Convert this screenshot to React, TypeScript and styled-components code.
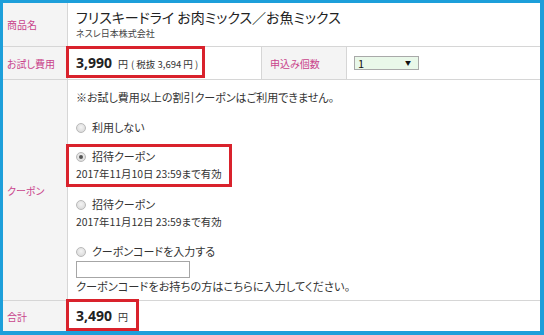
import React from "react";
import styled, { createGlobalStyle } from "styled-components";

const Global = createGlobalStyle`
  html, body { margin: 0; padding: 0; background: #fff; }
  body { font-family: "Noto Sans CJK JP", "Noto Sans", sans-serif; color: #333; }
  * { box-sizing: border-box; }
`;

const Frame = styled.div`
  width: 544px;
  height: 335px;
  border: 3px solid #1d9fda;
  border-right-width: 4px;
  border-bottom-width: 4px;
  background: #fff;
  display: flex;
  flex-direction: column;
  overflow: hidden;
  font-feature-settings: "palt";
`;

const Row = styled.div<{ $h?: number; $grow?: boolean; $last?: boolean }>`
  display: flex;
  height: ${(p) => (p.$h ? `${p.$h}px` : "auto")};
  flex: ${(p) => (p.$grow ? "1 1 auto" : "0 0 auto")};
  border-bottom: ${(p) => (p.$last ? "none" : "1px solid #d6d6d6")};
`;

const Label = styled.div<{ $w?: number; $pad?: number }>`
  width: ${(p) => p.$w ?? 65}px;
  flex: 0 0 auto;
  background: #f4f4f4;
  border-right: 1px solid #d6d6d6;
  color: #c9438b;
  font-size: 10px;
  display: flex;
  align-items: center;
  padding-left: ${(p) => p.$pad ?? 4}px;
`;

const Cell = styled.div<{ $w?: number; $center?: boolean }>`
  ${(p) => (p.$w ? `width: ${p.$w}px; flex: 0 0 auto;` : "flex: 1 1 auto;")}
  padding-left: 8px;
  display: flex;
  flex-direction: column;
  justify-content: ${(p) => (p.$center ? "center" : "flex-start")};
  border-right: ${(p) => (p.$w ? "1px solid #d6d6d6" : "none")};
`;

const ProductName = styled.div`
  font-size: 14px;
  line-height: 16px;
  margin-top: 6px;
  color: #222;
  white-space: nowrap;
`;

const Maker = styled.div`
  font-size: 9px;
  line-height: 14px;
  margin-top: 2px;
  color: #444;
`;

const Highlight = styled.div<{ $mt?: number; $mb?: number; $pad?: string }>`
  align-self: flex-start;
  border: 3px solid #d9222c;
  margin: ${(p) => p.$mt ?? 0}px 0 ${(p) => p.$mb ?? 0}px -10px;
  padding: ${(p) => p.$pad ?? "0 4px 0 7px"};
  display: flex;
  flex-direction: column;
  justify-content: center;
  background: #fff;
`;

const Price = styled.div`
  display: flex;
  align-items: baseline;
  white-space: nowrap;
`;

const Amount = styled.span`
  font-family: "Noto Sans", "Liberation Sans", sans-serif;
  font-weight: 700;
  font-size: 14px;
  color: #222;
`;

const Yen = styled.span`
  font-size: 10px;
  margin-left: 6px;
  color: #333;
`;

const Tax = styled.span`
  font-size: 9.5px;
  margin-left: 3px;
  color: #333;
  white-space: pre;
`;

const SelectBox = styled.div`
  width: 65px;
  height: 14px;
  margin-left: -1px;
  background: #e9f8e9;
  border: 1px solid #a9a9a9;
  display: flex;
  align-items: center;
  justify-content: space-between;
  padding: 0 7px 0 3px;
  font-size: 11px;
  line-height: 12px;
  color: #111;
`;

const Arrow = styled.span`
  font-size: 6px;
  color: #111;
`;

const Note = styled.div`
  font-size: 11px;
  line-height: 17px;
  margin-top: 9px;
  white-space: nowrap;
`;

const Option = styled.div<{ $mt?: number }>`
  margin-top: ${(p) => p.$mt ?? 13}px;
  display: flex;
  flex-direction: column;
`;

const RadioLine = styled.div`
  display: flex;
  align-items: center;
  font-size: 11px;
  line-height: 17px;
  gap: 6px;
`;

const Radio = styled.span<{ $on?: boolean }>`
  width: 10px;
  height: 10px;
  border-radius: 50%;
  border: 1px solid #b9b9b9;
  background: radial-gradient(circle at 50% 40%, #f4f4f4, #d4d4d4);
  display: inline-flex;
  align-items: center;
  justify-content: center;
  &::after {
    content: "";
    display: ${(p) => (p.$on ? "block" : "none")};
    width: 4px;
    height: 4px;
    border-radius: 50%;
    background: #555;
  }
`;

const SubLine = styled.div<{ $size?: number }>`
  font-size: ${(p) => p.$size ?? 10.4}px;
  line-height: 17px;
  color: #333;
  white-space: nowrap;
`;

const CodeInput = styled.div`
  width: 114px;
  height: 17px;
  border: 1px solid #a6a6a6;
  background: #fff;
  margin-top: 1px;
`;

export default function App() {
  return (
    <>
      <Global />
      <Frame>
        <Row $h={44}>
          <Label>商品名</Label>
          <Cell>
            <ProductName>フリスキードライ お肉ミックス／お魚ミックス</ProductName>
            <Maker>ネスレ日本株式会社</Maker>
          </Cell>
        </Row>
        <Row $h={33}>
          <Label>お試し費用</Label>
          <Cell $w={194}>
            <Highlight $mt={-1} $mb={1} $pad="0 4px 0 7px" style={{ flex: 1 }}>
              <Price>
                <Amount>3,990</Amount>
                <Yen>円</Yen>
                <Tax>( 税抜 3,694 円 )</Tax>
              </Price>
            </Highlight>
          </Cell>
          <Label $w={85} $pad={8}>申込み個数</Label>
          <Cell $center>
            <SelectBox>
              <span>1</span>
              <Arrow>▼</Arrow>
            </SelectBox>
          </Cell>
        </Row>
        <Row $grow>
          <Label>クーポン</Label>
          <Cell>
            <Note>※お試し費用以上の割引クーポンはご利用できません。</Note>
            <Option>
              <RadioLine>
                <Radio />
                利用しない
              </RadioLine>
            </Option>
            <Highlight $mt={8} $mb={-4} $pad="1px 7px 2px 7px">
              <RadioLine>
                <Radio $on />
                招待クーポン
              </RadioLine>
              <SubLine>2017年11月10日 23:59まで有効</SubLine>
            </Highlight>
            <Option>
              <RadioLine>
                <Radio />
                招待クーポン
              </RadioLine>
              <SubLine>2017年11月12日 23:59まで有効</SubLine>
            </Option>
            <Option>
              <RadioLine>
                <Radio />
                クーポンコードを入力する
              </RadioLine>
              <CodeInput />
              <SubLine $size={11.2}>クーポンコードをお持ちの方はこちらに入力してください。</SubLine>
            </Option>
          </Cell>
        </Row>
        <Row $h={30} $last>
          <Label>合計</Label>
          <Cell>
            <Highlight $mt={-2} $pad="0 8px 0 7px" style={{ flex: 1 }}>
              <Price>
                <Amount>3,490</Amount>
                <Yen>円</Yen>
              </Price>
            </Highlight>
          </Cell>
        </Row>
      </Frame>
    </>
  );
}
